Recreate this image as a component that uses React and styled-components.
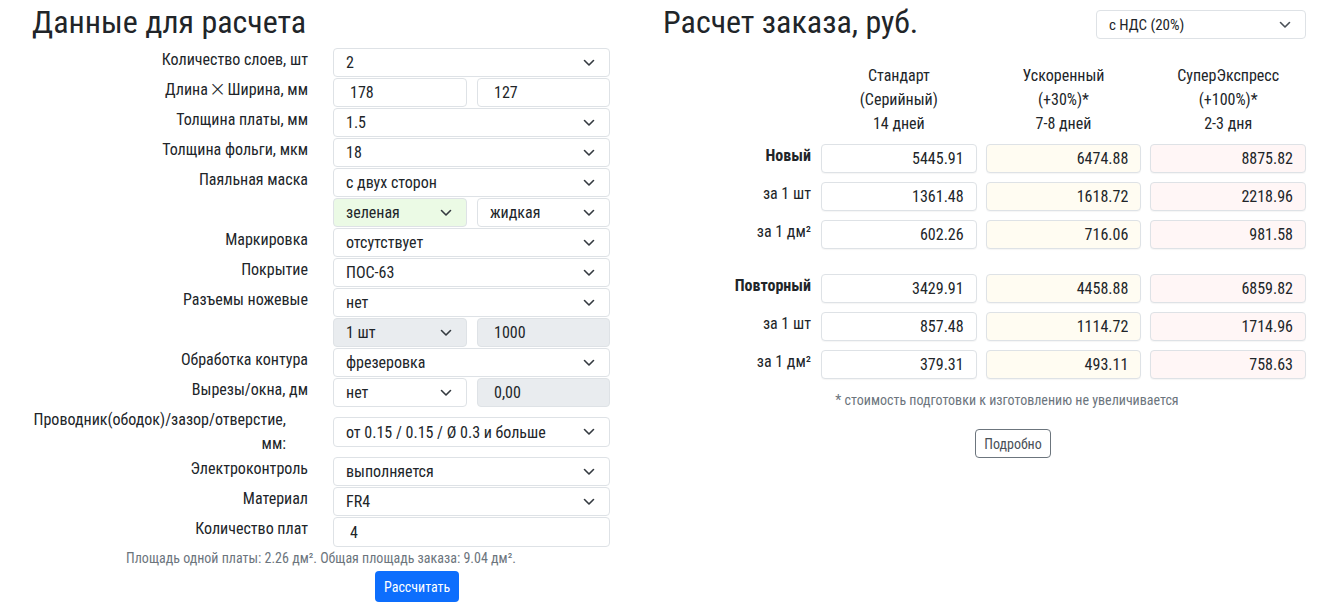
import React from 'react';
import styled, { createGlobalStyle } from 'styled-components';

const GlobalStyle = createGlobalStyle`
  body {
    margin: 0;
    background: #fff;
    color: #212529;
    font-family: "Roboto Condensed", Roboto, "Liberation Sans Narrow", sans-serif;
  }
  * { box-sizing: border-box; }
`;

const Page = styled.div`
  display: flex;
  width: 1320px;
`;

const LeftCol = styled.div`
  width: 663px;
`;

const RightCol = styled.div`
  width: 643px;
`;

const Title = styled.h2`
  margin: 0;
  padding-top: 3px;
  padding-left: ${p => p.$indent || 0}px;
  font-size: 32px;
  font-weight: 400;
  line-height: 38px;
`;

const Form = styled.div`
  display: grid;
  grid-template-columns: 308px 277px;
  column-gap: 25px;
  row-gap: 1px;
  margin-top: 7px;
`;

const Label = styled.div`
  text-align: right;
  font-size: 16px;
  line-height: 24px;
  align-self: start;
`;

const WideLabel = styled(Label)`
  align-self: center;
  padding-right: 22px;
`;

const Times = styled.span`
  display: inline-block;
  margin: 0 1px;
  font-family: "DejaVu Sans", sans-serif;
  font-size: 21px;
  font-weight: 200;
  line-height: 0;
  vertical-align: -1px;
`;

const Pair = styled.div`
  display: grid;
  grid-template-columns: 134px 133px;
  column-gap: 10px;
`;

const Slot = styled.div`
  align-self: center;
`;

const Box = styled.div`
  display: flex;
  align-items: center;
  justify-content: space-between;
  height: ${p => p.$h || 29}px;
  padding: 0 14px 0 12px;
  border: 1px solid #dee2e6;
  border-radius: 4px;
  background: ${p => p.$bg || '#fff'};
  font-size: 16px;
  color: #212529;
  white-space: nowrap;
`;

const Input = styled.input`
  display: block;
  width: 100%;
  height: ${p => p.$h || 29}px;
  padding: 0 12px 0 16px;
  border: 1px solid #dee2e6;
  border-radius: 4px;
  background: ${p => (p.disabled ? '#e9ecef' : '#fff')};
  font: inherit;
  font-size: 16px;
  color: #212529;
  outline: none;
`;

const Summary = styled.div`
  width: 642px;
  margin-top: 2px;
  text-align: center;
  font-size: 14px;
  line-height: 18px;
  color: #6c757d;
`;

const PrimaryButton = styled.button`
  display: block;
  margin: 4px 0 0 375px;
  height: 31px;
  padding: 0 9px;
  border: none;
  border-radius: 4px;
  background: #0d6efd;
  color: #fff;
  font: inherit;
  font-size: 14px;
`;

const Header = styled.div`
  display: flex;
  justify-content: space-between;
  align-items: flex-start;
`;

const VatSelect = styled(Box)`
  width: 210px;
  margin-top: 10px;
  padding-left: 12px;
  font-size: 15px;
`;

const Table = styled.div`
  display: grid;
  grid-template-columns: 149px repeat(3, 1fr);
  column-gap: 9px;
  row-gap: 9px;
  margin-top: 23px;
`;

const HeadCell = styled.div`
  text-align: center;
  font-size: 16px;
  line-height: 24px;
  margin-bottom: -1px;
`;

const RowLabel = styled.div`
  text-align: right;
  font-size: 16px;
  line-height: 24px;
  font-weight: ${p => (p.$bold ? 700 : 400)};
  padding-right: 1px;
`;

const Value = styled.input`
  display: block;
  width: 100%;
  height: 29px;
  padding: 0 12px;
  border: 1px solid #dee2e6;
  border-radius: 4px;
  background: ${p => p.$bg};
  box-shadow: 0 1px 1px rgba(0, 0, 0, 0.04);
  text-align: right;
  font: inherit;
  font-size: 16px;
  color: #212529;
  outline: none;
`;

const Spacer = styled.div`
  grid-column: 1 / -1;
  height: 7px;
`;

const Note = styled.div`
  margin-top: 11px;
  padding-left: 45px;
  text-align: center;
  font-size: 14px;
  line-height: 20px;
  color: #6c757d;
`;

const ButtonRow = styled.div`
  margin-top: 19px;
  padding-left: 57px;
  text-align: center;
`;

const OutlineButton = styled.button`
  height: 29px;
  padding: 0 8px;
  border: 1px solid #6c757d;
  border-radius: 4px;
  background: #fff;
  color: #495057;
  font: inherit;
  font-size: 14px;
`;

const Chevron = ({ color = '#343a40' }) => (
  <svg width="12" height="8" viewBox="0 0 12 8" fill="none">
    <path d="M1.5 1.5 6 6l4.5-4.5" stroke={color} strokeWidth="1.6" strokeLinecap="round" strokeLinejoin="round" />
  </svg>
);

const Select = ({ value, bg, h }) => (
  <Box $bg={bg} $h={h}>
    <span>{value}</span>
    <Chevron />
  </Box>
);

const columns = [
  { bg: '#fff', head: ['Стандарт', '(Серийный)', '14 дней'] },
  { bg: '#fffcf2', head: ['Ускоренный', '(+30%)*', '7-8 дней'] },
  { bg: '#fff6f6', head: ['СуперЭкспресс', '(+100%)*', '2-3 дня'] }
];

const groups = [
  {
    title: 'Новый',
    rows: [
      ['5445.91', '6474.88', '8875.82'],
      ['1361.48', '1618.72', '2218.96'],
      ['602.26', '716.06', '981.58']
    ]
  },
  {
    title: 'Повторный',
    rows: [
      ['3429.91', '4458.88', '6859.82'],
      ['857.48', '1114.72', '1714.96'],
      ['379.31', '493.11', '758.63']
    ]
  }
];

const rowTitles = (title) => [title, 'за 1 шт', 'за 1 дм²'];

export default function App() {
  return (
    <Page>
      <GlobalStyle />
      <LeftCol>
        <Title $indent={32}>Данные для расчета</Title>
        <Form>
          <Label>Количество слоев, шт</Label>
          <Select value="2" />

          <Label>Длина<Times>×</Times>Ширина, мм</Label>
          <Pair>
            <Input defaultValue="178" />
            <Input defaultValue="127" />
          </Pair>

          <Label>Толщина платы, мм</Label>
          <Select value="1.5" />

          <Label>Толщина фольги, мкм</Label>
          <Select value="18" />

          <Label>Паяльная маска</Label>
          <Select value="с двух сторон" />

          <Label />
          <Pair>
            <Select value="зеленая" bg="#ebfae5" />
            <Select value="жидкая" />
          </Pair>

          <Label>Маркировка</Label>
          <Select value="отсутствует" />

          <Label>Покрытие</Label>
          <Select value="ПОС-63" />

          <Label>Разъемы ножевые</Label>
          <Select value="нет" />

          <Label />
          <Pair>
            <Select value="1 шт" bg="#e9ecef" />
            <Input defaultValue="1000" disabled />
          </Pair>

          <Label>Обработка контура</Label>
          <Select value="фрезеровка" />

          <Label>Вырезы/окна, дм</Label>
          <Pair>
            <Select value="нет" />
            <Input defaultValue="0,00" disabled />
          </Pair>

          <WideLabel>Проводник(ободок)/зазор/отверстие,<br />мм:</WideLabel>
          <Slot>
            <Select value="от 0.15 / 0.15 / Ø 0.3 и больше" h={30} />
          </Slot>

          <Label>Электроконтроль</Label>
          <Select value="выполняется" />

          <Label>Материал</Label>
          <Select value="FR4" />

          <Label>Количество плат</Label>
          <Input defaultValue="4" $h={30} />
        </Form>
        <Summary>Площадь одной платы: 2.26 дм². Общая площадь заказа: 9.04 дм².</Summary>
        <PrimaryButton>Рассчитать</PrimaryButton>
      </LeftCol>

      <RightCol>
        <Header>
          <Title>Расчет заказа, руб.</Title>
          <VatSelect>
            <span>с НДС (20%)</span>
            <Chevron color="#495057" />
          </VatSelect>
        </Header>
        <Table>
          <div />
          {columns.map((c, i) => (
            <HeadCell key={i}>
              {c.head.map((line, j) => (
                <div key={j}>{line}</div>
              ))}
            </HeadCell>
          ))}
          {groups.map((g, gi) => (
            <React.Fragment key={g.title}>
              {gi > 0 && <Spacer />}
              {g.rows.map((row, ri) => (
                <React.Fragment key={ri}>
                  <RowLabel $bold={ri === 0}>{rowTitles(g.title)[ri]}</RowLabel>
                  {row.map((v, ci) => (
                    <Value key={ci} readOnly value={v} $bg={columns[ci].bg} />
                  ))}
                </React.Fragment>
              ))}
            </React.Fragment>
          ))}
        </Table>
        <Note>* стоимость подготовки к изготовлению не увеличивается</Note>
        <ButtonRow>
          <OutlineButton>Подробно</OutlineButton>
        </ButtonRow>
      </RightCol>
    </Page>
  );
}
